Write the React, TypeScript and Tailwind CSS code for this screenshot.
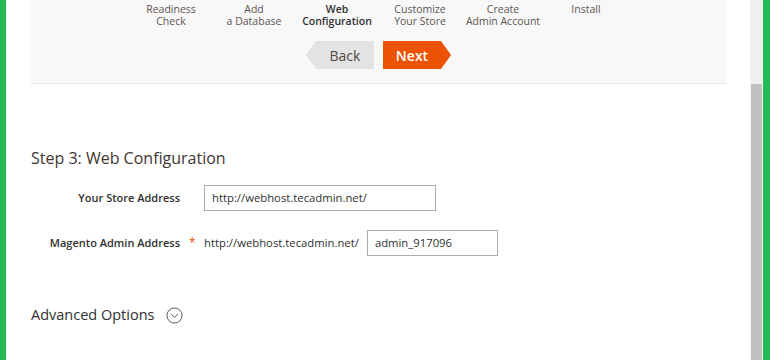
import React from 'react';

const steps = [
  ['Readiness', 'Check'],
  ['Add', 'a Database'],
  ['Web', 'Configuration'],
  ['Customize', 'Your Store'],
  ['Create', 'Admin Account'],
  ['Install', ''],
];

const App = () => {
  return (
    <div className="flex h-[360px] w-[770px] overflow-hidden bg-white font-['Open_Sans',sans-serif]">
      <div className="w-[6px] shrink-0 bg-[#22bb55]" />
      <div className="flex-1 pl-[25px] pr-[24px]">
        <div className="flex h-[84px] flex-col items-center border-b border-[#e9e9e9] bg-[#f8f8f8]">
          <div className="flex">
            {steps.map(([a, b], i) => (
              <div
                key={a}
                className={
                  'w-[83px] pt-[4px] text-center text-[10.5px] leading-[11.5px] ' +
                  (i === 2 ? 'font-semibold text-[#303030]' : 'text-[#5e5550]')
                }
              >
                <div>{a}</div>
                <div>{b}</div>
              </div>
            ))}
          </div>
          <div className="mt-[14px] flex gap-[9px]">
            <button className="flex h-[28px] w-[68px] items-center justify-center bg-[#e3e3e3] pl-[10px] text-[14px] text-[#514943] [clip-path:polygon(10px_0,100%_0,100%_100%,10px_100%,0_50%)]">
              Back
            </button>
            <button className="flex h-[28px] w-[68px] items-center justify-center bg-[#eb5202] pr-[10px] text-[14px] font-semibold text-white [clip-path:polygon(0_0,58px_0,100%_50%,58px_100%,0_100%)]">
              Next
            </button>
          </div>
        </div>

        <h2 className="mt-[62px] text-[16px] leading-[24px] text-[#41362f]">Step 3: Web Configuration</h2>

        <div className="mt-[15px] flex items-center">
          <div className="w-[149px] text-right text-[11px] font-semibold text-[#303030]">Your Store Address</div>
          <div className="ml-[24px] flex h-[26px] w-[232px] items-center border border-[#adadad] px-[7px] text-[11.3px] text-[#303030]">
            http://webhost.tecadmin.net/
          </div>
        </div>

        <div className="mt-[19px] flex items-center">
          <div className="w-[149px] text-right text-[11px] font-semibold text-[#303030]">Magento Admin Address</div>
          <div className="ml-[9px] w-[15px] text-[12px] text-[#eb5202]">*</div>
          <div className="text-[11.3px] text-[#303030]">http://webhost.tecadmin.net/</div>
          <div className="ml-[8px] flex h-[26px] w-[131px] items-center border border-[#adadad] px-[7px] text-[11.3px] text-[#303030]">
            admin_917096
          </div>
        </div>

        <div className="mt-[48px] flex items-center">
          <span className="text-[14.5px] leading-[22px] text-[#303030]">Advanced Options</span>
          <svg className="ml-[12px]" width="17" height="17" viewBox="0 0 18 18" fill="none">
            <circle cx="9" cy="9" r="8" stroke="#514943" strokeWidth="1" />
            <path d="M5.5 7.5 L9 11 L12.5 7.5" stroke="#514943" strokeWidth="1" />
          </svg>
        </div>
      </div>
      <div className="flex w-[13px] shrink-0 flex-col bg-[#f0f0f0]">
        <div className="mx-[1px] mt-[84px] flex-1 bg-[#c1c1c1]" />
      </div>
      <div className="w-[7px] shrink-0 bg-[#22bb55]" />
    </div>
  );
};

export default App;
